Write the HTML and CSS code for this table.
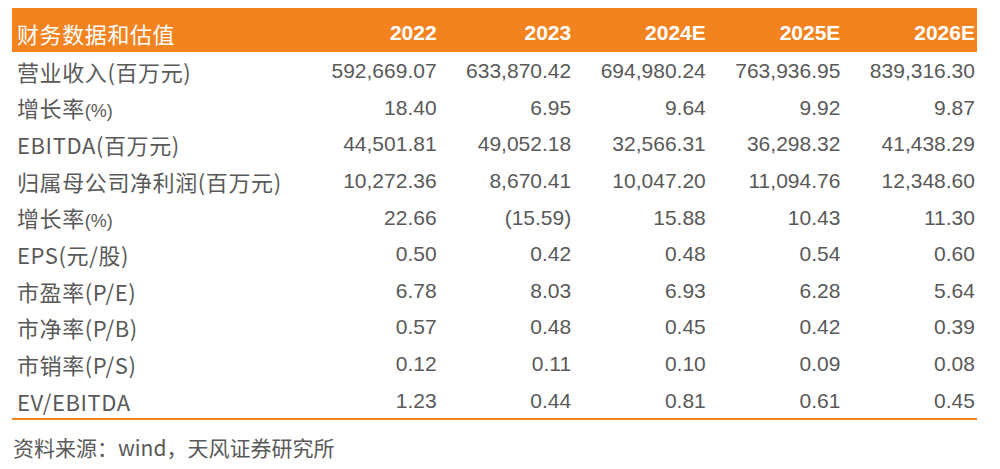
FILE: index.html
```html
<!DOCTYPE html>
<html lang="zh-CN">
<head>
<meta charset="utf-8">
<link rel="stylesheet" href="styles.css">
</head>
<body>
<div class="report">
  <div class="table">
    <div class="row head">
      <div class="label">财务数据和估值</div>
      <div class="num">2022</div>
      <div class="num">2023</div>
      <div class="num">2024E</div>
      <div class="num">2025E</div>
      <div class="num">2026E</div>
    </div>
    <div class="row">
      <div class="label">营业收入(百万元)</div>
      <div class="num">592,669.07</div><div class="num">633,870.42</div><div class="num">694,980.24</div><div class="num">763,936.95</div><div class="num">839,316.30</div>
    </div>
    <div class="row">
      <div class="label">增长率<span class="pct">(%)</span></div>
      <div class="num">18.40</div><div class="num">6.95</div><div class="num">9.64</div><div class="num">9.92</div><div class="num">9.87</div>
    </div>
    <div class="row">
      <div class="label">EBITDA(百万元)</div>
      <div class="num">44,501.81</div><div class="num">49,052.18</div><div class="num">32,566.31</div><div class="num">36,298.32</div><div class="num">41,438.29</div>
    </div>
    <div class="row">
      <div class="label">归属母公司净利润(百万元)</div>
      <div class="num">10,272.36</div><div class="num">8,670.41</div><div class="num">10,047.20</div><div class="num">11,094.76</div><div class="num">12,348.60</div>
    </div>
    <div class="row">
      <div class="label">增长率<span class="pct">(%)</span></div>
      <div class="num">22.66</div><div class="num">(15.59)</div><div class="num">15.88</div><div class="num">10.43</div><div class="num">11.30</div>
    </div>
    <div class="row">
      <div class="label">EPS(元/股)</div>
      <div class="num">0.50</div><div class="num">0.42</div><div class="num">0.48</div><div class="num">0.54</div><div class="num">0.60</div>
    </div>
    <div class="row">
      <div class="label">市盈率(P/E)</div>
      <div class="num">6.78</div><div class="num">8.03</div><div class="num">6.93</div><div class="num">6.28</div><div class="num">5.64</div>
    </div>
    <div class="row">
      <div class="label">市净率(P/B)</div>
      <div class="num">0.57</div><div class="num">0.48</div><div class="num">0.45</div><div class="num">0.42</div><div class="num">0.39</div>
    </div>
    <div class="row">
      <div class="label">市销率(P/S)</div>
      <div class="num">0.12</div><div class="num">0.11</div><div class="num">0.10</div><div class="num">0.09</div><div class="num">0.08</div>
    </div>
    <div class="row last">
      <div class="label">EV/EBITDA</div>
      <div class="num">1.23</div><div class="num">0.44</div><div class="num">0.81</div><div class="num">0.61</div><div class="num">0.45</div>
    </div>
  </div>
  <div class="source">资料来源：wind，天风证券研究所</div>
</div>
</body>
</html>
```
FILE: styles.css
```css
html, body {
  margin: 0;
  padding: 0;
  background: #ffffff;
}
body {
  font-family: "Liberation Sans", "Noto Sans CJK SC", sans-serif;
  color: #595959;
}
.report {
  margin: 8px 0 0 12px;
  width: 965px;
}
.table {
  border-bottom: 2px solid #f3831f;
}
.row {
  display: grid;
  grid-template-columns: 292px repeat(5, 134.6px);
  height: 36.6px;
  box-sizing: border-box;
  padding-top: 2px;
  align-items: center;
  font-size: 21px;
}
.row .label {
  padding-left: 5px;
  font-family: "Noto Sans CJK SC", sans-serif;
  font-size: 22px;
  white-space: nowrap;
  letter-spacing: 0.6px;
  line-height: 1;
}
.row .num {
  text-align: right;
  padding-right: 2px;
  white-space: nowrap;
}
.pct {
  font-family: "Liberation Sans Narrow", "Liberation Sans", sans-serif;
  font-size: 18px;
  letter-spacing: 0;
}
.row.head {
  height: 44px;
  padding-top: 5px;
  background: #f3831f;
  color: #ffffff;
}
.row.head .label {
  font-size: 22px;
  letter-spacing: 0.6px;
}
.row.head .num {
  font-weight: bold;
  font-size: 21px;
}
.source {
  margin-top: 12px;
  padding-left: 1px;
  font-family: "Noto Sans CJK SC", sans-serif;
  font-size: 21px;
  color: #595959;
}
```
